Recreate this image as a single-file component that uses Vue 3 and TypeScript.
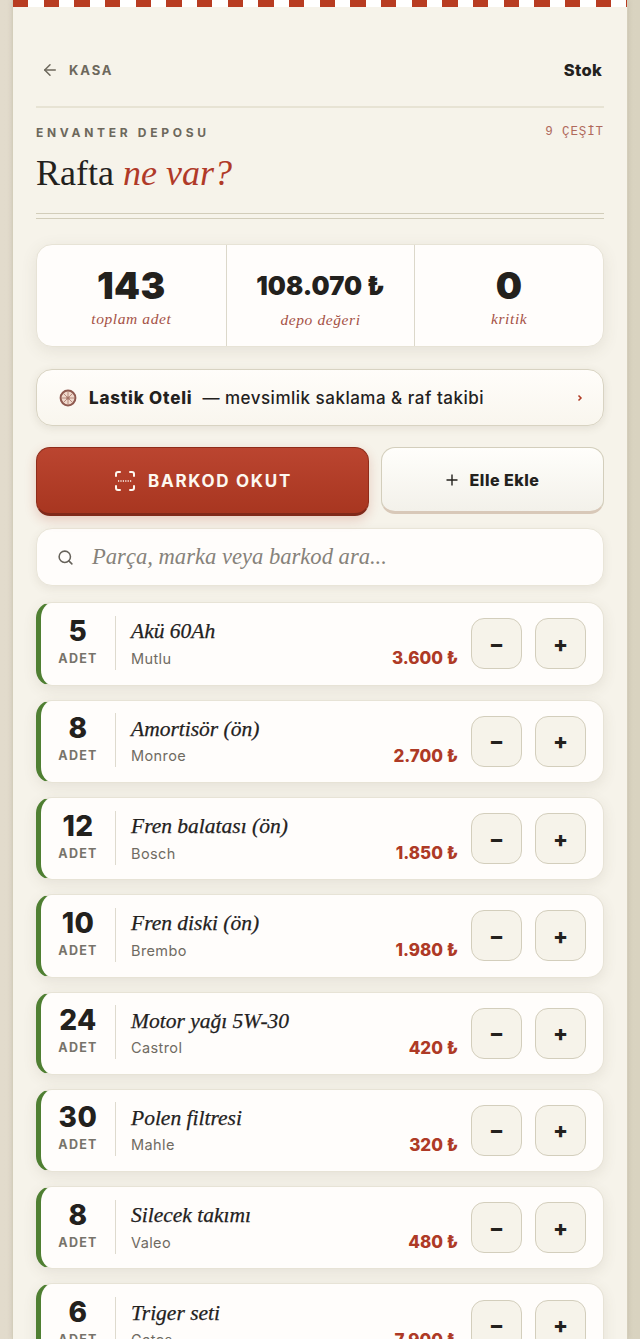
<template>
  <div class="page">
    <main class="panel">
      <div class="stripe"></div>
      <div class="content">
        <header class="topbar">
          <a class="back">
            <svg width="18" height="18" viewBox="0 0 24 24" fill="none" stroke="currentColor" stroke-width="2" stroke-linecap="round" stroke-linejoin="round">
              <path d="M19 12H5" />
              <path d="M12 19l-7-7 7-7" />
            </svg>
            <span>KASA</span>
          </a>
          <span class="crumb">Stok</span>
        </header>

        <div class="eyebrow">
          <span class="eyebrow-label">ENVANTER DEPOSU</span>
          <span class="eyebrow-count">9 ÇEŞİT</span>
        </div>
        <h1 class="title">Rafta <em>ne var?</em></h1>
        <div class="double-rule"></div>

        <section class="stats">
          <div v-for="s in stats" :key="s.label" class="stat">
            <div class="stat-value" :class="{ small: s.small }">{{ s.value }}</div>
            <div class="stat-label">{{ s.label }}</div>
          </div>
        </section>

        <a class="hotel">
          <svg class="wheel" width="18" height="18" viewBox="0 0 18 18" fill="none">
            <circle cx="9" cy="9" r="7.4" fill="#f0d9cc" stroke="#8f5a50" stroke-width="2" />
            <circle cx="9" cy="9" r="1.6" fill="#8f5a50" />
            <path d="M9 2.5v13M2.5 9h13M4.4 4.4l9.2 9.2M13.6 4.4l-9.2 9.2" stroke="#a8766a" stroke-width="0.8" />
          </svg>
          <strong>Lastik Oteli</strong>
          <span class="hotel-text">— mevsimlik saklama &amp; raf takibi</span>
          <svg class="chev" width="6" height="8" viewBox="0 0 6 8" fill="none" stroke="#b03a24" stroke-width="1.5">
            <path d="M1.5 1.5L4 4 1.5 6.5" />
          </svg>
        </a>

        <div class="actions">
          <button class="btn-scan">
            <svg width="24" height="24" viewBox="0 0 24 24" fill="none" stroke="currentColor" stroke-width="2" stroke-linecap="round" stroke-linejoin="round">
              <path d="M3 7V5a2 2 0 0 1 2-2h2" />
              <path d="M17 3h2a2 2 0 0 1 2 2v2" />
              <path d="M21 17v2a2 2 0 0 1-2 2h-2" />
              <path d="M7 21H5a2 2 0 0 1-2-2v-2" />
              <path d="M5 12h14" stroke-width="1.4" stroke-dasharray="1.2 1.2" stroke-linecap="butt" />
            </svg>
            <span>BARKOD OKUT</span>
          </button>
          <button class="btn-add">
            <svg width="12" height="12" viewBox="0 0 12 12" fill="none" stroke="currentColor" stroke-width="1.4">
              <path d="M6 0.5v11M0.5 6h11" />
            </svg>
            <span>Elle Ekle</span>
          </button>
        </div>

        <label class="search">
          <svg width="17" height="17" viewBox="0 0 24 24" fill="none" stroke="#66625a" stroke-width="2.2" stroke-linecap="round">
            <circle cx="11" cy="11" r="8" />
            <path d="M21 21l-4.3-4.3" />
          </svg>
          <span class="search-text">Parça, marka veya barkod ara...</span>
        </label>

        <ul class="list">
          <li v-for="p in parts" :key="p.name" class="row">
            <div class="qty">
              <div class="qty-num">{{ p.qty }}</div>
              <div class="qty-unit">ADET</div>
            </div>
            <div class="info">
              <div class="name">{{ p.name }}</div>
              <div class="info-bottom">
                <span class="brand">{{ p.brand }}</span>
                <span class="price">{{ p.price }} ₺</span>
              </div>
            </div>
            <div class="steppers">
              <button class="step">−</button>
              <button class="step">+</button>
            </div>
          </li>
        </ul>
      </div>
    </main>
  </div>
</template>

<script setup lang="ts">
interface Part {
  qty: number
  name: string
  brand: string
  price: string
}

const stats = [
  { value: '143', label: 'toplam adet', small: false },
  { value: '108.070 ₺', label: 'depo değeri', small: true },
  { value: '0', label: 'kritik', small: false }
]

const parts: Part[] = [
  { qty: 5, name: 'Akü 60Ah', brand: 'Mutlu', price: '3.600' },
  { qty: 8, name: 'Amortisör (ön)', brand: 'Monroe', price: '2.700' },
  { qty: 12, name: 'Fren balatası (ön)', brand: 'Bosch', price: '1.850' },
  { qty: 10, name: 'Fren diski (ön)', brand: 'Brembo', price: '1.980' },
  { qty: 24, name: 'Motor yağı 5W-30', brand: 'Castrol', price: '420' },
  { qty: 30, name: 'Polen filtresi', brand: 'Mahle', price: '320' },
  { qty: 8, name: 'Silecek takımı', brand: 'Valeo', price: '480' },
  { qty: 6, name: 'Triger seti', brand: 'Gates', price: '7.900' }
]
</script>

<style>
html,
body {
  margin: 0;
  background: #dfd8c8;
}
</style>

<style scoped>
.page {
  height: 1339px;
  overflow: hidden;
  padding: 0 13px;
  background: linear-gradient(90deg, #e2dbcc, #d9d3c0);
  font-family: Inter, "Noto Sans", sans-serif;
  color: #23211d;
}

.panel {
  height: 100%;
  background: #f6f3ea;
  box-shadow: 0 0 0 1px #d4cebb, 0 0 6px rgba(80, 70, 50, 0.2);
}

.stripe {
  height: 6.7px;
  background: repeating-linear-gradient(90deg, #b83c22 0, #b83c22 15.4px, #fff 15.4px, #fff 30.67px);
}

.content {
  padding: 0 23px;
}

.topbar {
  display: flex;
  align-items: center;
  justify-content: space-between;
  height: 101px;
  padding-top: 28px;
  border-bottom: 2px solid #e7e3d4;
  box-sizing: border-box;
}

.back {
  display: flex;
  align-items: center;
  gap: 10px;
  padding-left: 5px;
  color: #6d685c;
  font-size: 13px;
  font-weight: 700;
  letter-spacing: 1.9px;
}

.crumb {
  font-size: 16.5px;
  font-weight: 800;
  letter-spacing: 0.3px;
  padding-right: 2px;
}

.eyebrow {
  display: flex;
  align-items: center;
  justify-content: space-between;
  margin-top: 17.5px;
  height: 14px;
}

.eyebrow-label {
  font-size: 12px;
  font-weight: 700;
  letter-spacing: 3.7px;
  color: #6d685c;
}

.eyebrow-count {
  font-family: "Liberation Mono", monospace;
  font-size: 12.5px;
  letter-spacing: 0.9px;
  color: #b0695c;
}

.title {
  margin: 12px 0 0;
  height: 44px;
  line-height: 44px;
  font-family: "Liberation Serif", serif;
  font-size: 36px;
  font-weight: 400;
  color: #23211d;
}

.title em {
  color: #b03a28;
}

.double-rule {
  margin-top: 18px;
  height: 6px;
  box-sizing: border-box;
  border-top: 1.5px solid #d2cdba;
  border-bottom: 1.5px solid #d2cdba;
}

.stats {
  display: grid;
  grid-template-columns: 1fr 1fr 1fr;
  height: 103px;
  box-sizing: border-box;
  margin-top: 25px;
  background: #fffdfb;
  border: 1px solid #e7e3d6;
  border-radius: 16px;
  box-shadow: 0 4px 16px rgba(90, 80, 55, 0.1);
}

.stat {
  display: flex;
  flex-direction: column;
  align-items: center;
  border-left: 1px solid #dcd8ca;
}

.stat:first-child {
  border-left: 0;
}

.stat-value {
  margin-top: 21px;
  height: 40px;
  line-height: 40px;
  font-size: 37px;
  font-weight: 900;
  letter-spacing: 0.4px;
  color: #23211d;
}

.stat-value.small {
  height: 41px;
  font-size: 25.5px;
  letter-spacing: 0;
}

.stat-label {
  margin-top: 4px;
  font-family: "Liberation Serif", serif;
  font-style: italic;
  font-size: 15.5px;
  letter-spacing: 0.6px;
  color: #a55246;
}

.hotel {
  display: flex;
  align-items: center;
  height: 57px;
  box-sizing: border-box;
  margin-top: 22px;
  padding: 0 20px 0 22px;
  background: linear-gradient(180deg, #fffdfa, #f9f6ee);
  border: 1px solid #d8d3c2;
  border-radius: 16px;
  box-shadow: 0 2px 8px rgba(90, 80, 55, 0.12);
  font-size: 17px;
}

.hotel strong {
  margin-left: 12px;
  font-weight: 800;
  letter-spacing: 0.8px;
}

.hotel-text {
  margin-left: 10px;
  font-weight: 500;
  letter-spacing: 0.5px;
}

.chev {
  margin-left: auto;
}

.actions {
  display: flex;
  gap: 12px;
  margin-top: 21px;
}

button {
  font-family: inherit;
  cursor: pointer;
}

.btn-scan {
  display: flex;
  align-items: center;
  justify-content: center;
  gap: 11px;
  flex: 0 0 333px;
  height: 69px;
  box-sizing: border-box;
  border: 1px solid #8f2c1a;
  border-bottom: 3px solid #80291a;
  border-radius: 14px;
  background: linear-gradient(180deg, #bb4530, #a83620);
  color: #fdf8f0;
  font-size: 17px;
  font-weight: 700;
  letter-spacing: 1.7px;
  box-shadow: 0 4px 12px rgba(176, 58, 36, 0.22);
}

.btn-add {
  display: flex;
  align-items: center;
  justify-content: center;
  gap: 12px;
  flex: 1;
  height: 67px;
  box-sizing: border-box;
  border: 1px solid #d3cebc;
  border-bottom: 3px solid #d8c8b8;
  border-radius: 14px;
  background: linear-gradient(180deg, #fffefb, #f3f1ea);
  color: #23211d;
  font-size: 16px;
  font-weight: 800;
  letter-spacing: 0.5px;
}

.search {
  display: flex;
  align-items: center;
  gap: 18px;
  height: 58px;
  box-sizing: border-box;
  margin-top: 12px;
  padding-left: 20px;
  background: #fffdfb;
  border: 1px solid #e9e5d8;
  border-radius: 16px;
  box-shadow: 0 3px 10px rgba(90, 80, 55, 0.09);
}

.search-text {
  font-family: "Liberation Serif", serif;
  font-style: italic;
  font-size: 22.6px;
  color: #86827a;
}

.list {
  display: flex;
  flex-direction: column;
  gap: 14px;
  margin: 16px 0 0;
  padding: 0;
  list-style: none;
}

.row {
  display: flex;
  align-items: center;
  height: 83.33px;
  box-sizing: border-box;
  padding-right: 17px;
  background: #fffdfb;
  border: 1px solid #e7e3d6;
  border-left: 5px solid #4f7f32;
  border-radius: 16px;
  box-shadow: 0 4px 14px rgba(90, 80, 55, 0.1);
}

.qty {
  flex: 0 0 75px;
  height: 54px;
  margin-bottom: 2px;
  box-sizing: border-box;
  border-right: 1px solid #dedace;
  text-align: center;
}

.qty-num {
  height: 30px;
  line-height: 30px;
  font-size: 28px;
  font-weight: 800;
  letter-spacing: 0.5px;
}

.qty-unit {
  margin-top: 5px;
  font-size: 12.5px;
  font-weight: 700;
  letter-spacing: 1.3px;
  color: #77736a;
}

.info {
  flex: 1;
  min-width: 0;
  margin-bottom: 2px;
  padding: 0 13px 0 15px;
}

.name {
  height: 28px;
  line-height: 28px;
  font-family: "Liberation Serif", serif;
  font-style: italic;
  font-size: 21.5px;
  font-weight: 400;
  -webkit-text-stroke: 0.25px #23211d;
}

.info-bottom {
  display: flex;
  justify-content: space-between;
  align-items: center;
  margin-top: 3px;
}

.brand {
  font-size: 14.5px;
  letter-spacing: 0.4px;
  color: #6f6b62;
}

.price {
  font-size: 17px;
  font-weight: 800;
  color: #ae3a26;
}

.steppers {
  display: flex;
  gap: 13px;
}

.step {
  width: 51px;
  height: 51px;
  padding: 0;
  background: #f6f3ea;
  border: 1px solid #d3cebc;
  border-radius: 13px;
  color: #23211d;
  font-size: 22px;
  font-weight: 800;
  line-height: 1;
}
</style>
